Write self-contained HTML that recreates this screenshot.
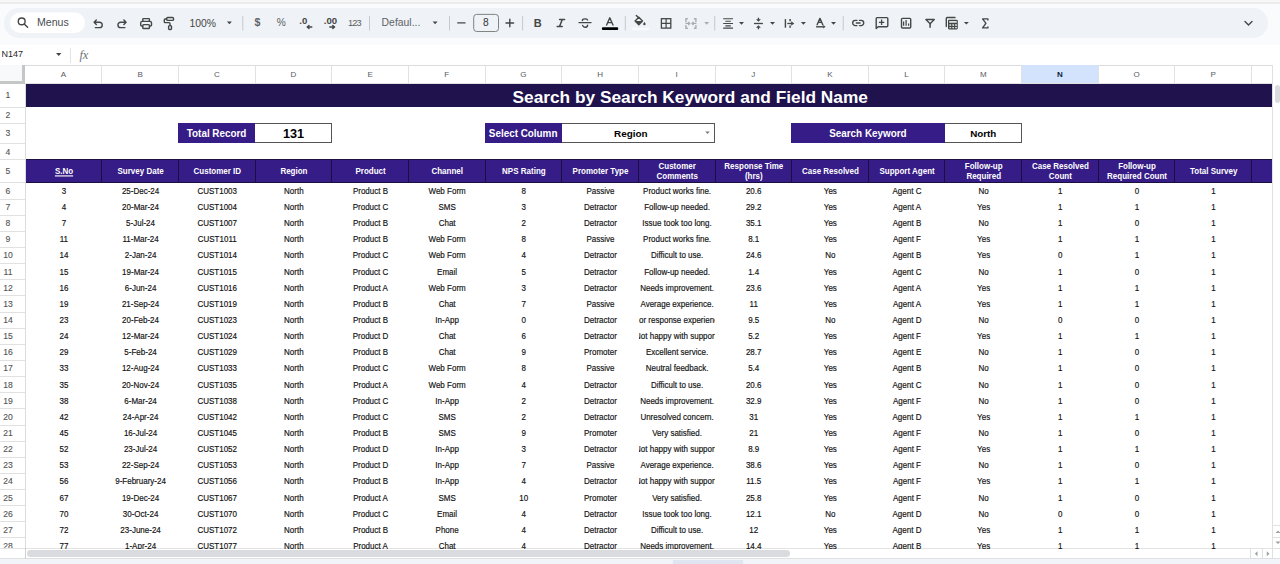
<!DOCTYPE html>
<html><head><meta charset="utf-8">
<style>
*{margin:0;padding:0;box-sizing:border-box}
html,body{width:1280px;height:564px;overflow:hidden;background:#f9fbfd;font-family:"Liberation Sans",sans-serif;position:relative}
.abs{position:absolute}
.t{position:absolute;white-space:nowrap;color:#444746}
.cell{position:absolute;display:flex;align-items:center;justify-content:center;white-space:nowrap;overflow:hidden;font-size:8px;color:#111;-webkit-text-stroke:0.15px #111}
.cell span,.hd span{display:inline-block;transform:scaleY(1.13)}
.hd{position:absolute;display:flex;align-items:center;justify-content:center;text-align:center;white-space:nowrap;overflow:hidden;font-size:8px;color:#fff;font-weight:bold;line-height:8.5px}
.colh{position:absolute;top:65.2px;height:18.4px;display:flex;align-items:center;justify-content:center;font-size:8px;color:#575b5f}
.rowh{position:absolute;left:0;width:16px;font-size:8.6px;color:#555;-webkit-text-stroke:0.12px #555;display:flex;align-items:center;justify-content:center}
svg{position:absolute;left:0;top:0;overflow:visible}
</style></head><body>

<div class="abs" style="left:0;top:0;width:1280px;height:1.8px;background:#f7f7f8"></div>
<div class="abs" style="left:0;top:1.8px;width:1280px;height:2px;background:#ececee"></div>
<svg width="1280" height="70" viewBox="0 0 1280 70"><rect x="4" y="8" width="1264" height="30" rx="15" fill="#eff2f6"/><rect x="10" y="12.5" width="75" height="20.5" rx="10.25" fill="#ffffff"/><circle cx="21.7" cy="21.4" r="3.4" fill="none" stroke="#444746" stroke-width="1.4" stroke-linecap="round" stroke-linejoin="round"/><line x1="24.2" y1="23.9" x2="27.6" y2="27.3" fill="none" stroke="#444746" stroke-width="1.4" stroke-linecap="round" stroke-linejoin="round" stroke-width="1.5"/><path d="M96.3 20.1 L94.1 22.3 L96.3 24.5 M94.1 22.3 H99.6 A2.65 2.65 0 0 1 99.6 27.6 H95.3" fill="none" stroke="#444746" stroke-width="1.4" stroke-linecap="round" stroke-linejoin="round" stroke-width="1.35"/><path d="M123.9 20.1 L126.1 22.3 L123.9 24.5 M126.1 22.3 H120.6 A2.65 2.65 0 0 0 120.6 27.6 H124.9" fill="none" stroke="#444746" stroke-width="1.4" stroke-linecap="round" stroke-linejoin="round" stroke-width="1.35"/><path d="M142.8 21.2 V19.2 Q142.8 18.6 143.4 18.6 H148.8 Q149.4 18.6 149.4 19.2 V21.2" fill="none" stroke="#444746" stroke-width="1.4" stroke-linecap="round" stroke-linejoin="round" stroke-width="1.3"/><path d="M142.6 26.0 H141.8 Q140.7 26.0 140.7 24.9 V22.9 Q140.7 21.4 142.2 21.4 H150.0 Q151.5 21.4 151.5 22.9 V24.9 Q151.5 26.0 150.4 26.0 H149.6" fill="none" stroke="#444746" stroke-width="1.4" stroke-linecap="round" stroke-linejoin="round" stroke-width="1.3"/><rect x="142.8" y="24.6" width="6.6" height="3.9" rx="0.8" fill="none" stroke="#444746" stroke-width="1.4" stroke-linecap="round" stroke-linejoin="round" stroke-width="1.3"/><rect x="166.6" y="17.5" width="7.0" height="2.9" rx="1.2" fill="none" stroke="#444746" stroke-width="1.4" stroke-linecap="round" stroke-linejoin="round" stroke-width="1.3"/><path d="M166.6 19.0 H165.2 Q164.3 19.0 164.3 19.9 V21.8 Q164.3 22.6 165.1 22.6 H169.2 Q170.0 22.6 170.0 23.4 V25.5" fill="none" stroke="#444746" stroke-width="1.4" stroke-linecap="round" stroke-linejoin="round" stroke-width="1.3"/><rect x="168.6" y="25.6" width="2.9" height="3.9" rx="0.9" fill="none" stroke="#444746" stroke-width="1.4" stroke-linecap="round" stroke-linejoin="round" stroke-width="1.3"/><path d="M226.90 21.60 h5 l-2.5 2.7 z" fill="#444746"/><path d="M432.60 21.60 h5 l-2.5 2.7 z" fill="#444746"/><rect x="242.30" y="16" width="1" height="14.5" fill="#c7c9cc"/><rect x="369.00" y="16" width="1" height="14.5" fill="#c7c9cc"/><rect x="449.00" y="16" width="1" height="14.5" fill="#c7c9cc"/><rect x="522.10" y="16" width="1" height="14.5" fill="#c7c9cc"/><rect x="624.80" y="16" width="1" height="14.5" fill="#c7c9cc"/><rect x="714.20" y="16" width="1" height="14.5" fill="#c7c9cc"/><rect x="842.70" y="16" width="1" height="14.5" fill="#c7c9cc"/><path d="M311.8 27.0 H307.4 M309.0 25.4 L307.2 27.0 L309.0 28.6" fill="none" stroke="#444746" stroke-width="1.4" stroke-linecap="round" stroke-linejoin="round" stroke-width="1.4"/><path d="M329.8 27.0 H334.4 M332.8 25.4 L334.6 27.0 L332.8 28.6" fill="none" stroke="#444746" stroke-width="1.4" stroke-linecap="round" stroke-linejoin="round" stroke-width="1.4"/><path d="M457.8 22.9 H465.0" fill="none" stroke="#444746" stroke-width="1.4" stroke-linecap="round" stroke-linejoin="round" stroke-width="1.4"/><path d="M506.0 23.0 H513.6 M509.8 19.2 V26.8" fill="none" stroke="#444746" stroke-width="1.4" stroke-linecap="round" stroke-linejoin="round" stroke-width="1.4"/><rect x="473.7" y="14.4" width="24.8" height="17.1" rx="3" fill="none" stroke="#747775" stroke-width="0.9"/><path d="M579.0 22.6 H591.0" fill="none" stroke="#444746" stroke-width="1.4" stroke-linecap="round" stroke-linejoin="round" stroke-width="1.2"/><path d="M587.6 20.0 Q587.0 18.9 585.0 18.9 Q582.4 18.9 582.4 20.6" fill="none" stroke="#444746" stroke-width="1.4" stroke-linecap="round" stroke-linejoin="round" stroke-width="1.3"/><path d="M582.6 25.4 Q583.2 27.3 585.0 27.3 Q587.6 27.3 587.6 25.2" fill="none" stroke="#444746" stroke-width="1.4" stroke-linecap="round" stroke-linejoin="round" stroke-width="1.3"/><rect x="601.9" y="27.3" width="16.3" height="2.7" rx="1" fill="#000"/><path d="M606.6 25.0 L609.8 17.8 L613.0 25.0 M607.7 22.6 H611.9" fill="none" stroke="#444746" stroke-width="1.4" stroke-linecap="round" stroke-linejoin="round" stroke-width="1.3" stroke-linecap="butt"/><path d="M636.3 15.4 L638.7 17.8" fill="none" stroke="#444746" stroke-width="1.4" stroke-linecap="round" stroke-linejoin="round" stroke-width="1.3"/><path d="M638.8 17.3 L642.5 21.0 L638.8 24.7 L635.1 21.0 Z" fill="none" stroke="#444746" stroke-width="1.4" stroke-linejoin="round"/><path d="M635.3 21.1 L642.3 21.1 L638.8 24.6 Z" fill="#444746"/><path d="M644.4 21.9 L645.5 23.6 A1.2 1.2 0 1 1 643.3 23.6 Z" fill="#444746"/><rect x="632" y="27.6" width="17" height="2.8" fill="#f8fafd"/><rect x="661.4" y="18.7" width="9.4" height="9.4" fill="none" stroke="#444746" stroke-width="1.3"/><path d="M666.1 18.7 V28.1 M661.4 23.4 H670.8" stroke="#444746" stroke-width="1.2"/><path d="M687.9 18.7 H685.9 V21.9 M685.9 24.9 V28.2 H687.9 M693.9 18.7 H695.9 V21.9 M695.9 24.9 V28.2 H693.9" fill="none" stroke="#a9acb0" stroke-width="1.35"/><path d="M685.4 23.4 H689.6 M688.2 21.9 L689.7 23.4 L688.2 24.9 M696.4 23.4 H692.2 M693.6 21.9 L692.1 23.4 L693.6 24.9" fill="none" stroke="#a9acb0" stroke-width="1.35" stroke-width="1.2"/><path d="M704.20 22.00 h5 l-2.5 2.7 z" fill="#a9acb0"/><path d="M723.2 18.8 H733.0 M725.4 21.3 H730.8 M723.2 23.5 H733.0 M725.4 25.9 H730.8 M723.2 28.1 H733.0" stroke="#444746" stroke-width="1.1"/><path d="M739.00 22.00 h5 l-2.5 2.7 z" fill="#444746"/><path d="M754.0 23.5 H762.9" stroke="#444746" stroke-width="1.3"/><path d="M758.45 17.7 V20.0" stroke="#444746" stroke-width="1.3"/><path d="M756.0 19.2 H760.9 L758.45 21.7 Z" fill="#444746"/><path d="M758.45 27.0 V29.3" stroke="#444746" stroke-width="1.3"/><path d="M756.0 27.8 H760.9 L758.45 25.2 Z" fill="#444746"/><path d="M770.00 22.00 h5 l-2.5 2.7 z" fill="#444746"/><path d="M785.4 19.1 V27.7" stroke="#444746" stroke-width="1.4"/><path d="M790.1 19.0 V21.2 M790.1 25.6 V27.8" stroke="#444746" stroke-width="1.5"/><path d="M787.3 23.5 H792.2" stroke="#444746" stroke-width="1.3"/><path d="M791.2 21.2 L794.2 23.5 L791.2 25.8 Z" fill="#444746"/><path d="M800.90 22.00 h5 l-2.5 2.7 z" fill="#444746"/><path d="M817.1 24.7 L819.95 18.4 L822.8 24.7 M818.1 22.4 H821.8" fill="none" stroke="#444746" stroke-width="1.4" stroke-linecap="round" stroke-linejoin="round" stroke-width="1.35" stroke-linecap="butt"/><path d="M816.1 26.8 H823.6" stroke="#444746" stroke-width="1.4"/><path d="M823.2 25.0 L825.6 26.8 L823.2 28.6 Z" fill="#444746"/><path d="M831.00 22.00 h5 l-2.5 2.7 z" fill="#444746"/><path d="M856.9 20.4 H855.3 A2.6 2.6 0 0 0 855.3 25.6 H856.9 M859.5 20.4 H861.1 A2.6 2.6 0 0 1 861.1 25.6 H859.5 M856.3 23.0 H860.1" fill="none" stroke="#444746" stroke-width="1.4" stroke-linecap="round" stroke-linejoin="round" stroke-width="1.4" stroke-linecap="butt"/><path d="M876.2 28.6 V18.6 Q876.2 17.6 877.2 17.6 H886.8 Q887.8 17.6 887.8 18.6 V25.8 Q887.8 26.8 886.8 26.8 H878.2 Z" fill="none" stroke="#444746" stroke-width="1.4" stroke-linecap="round" stroke-linejoin="round" stroke-width="1.25"/><path d="M881.6 19.6 V25.0 M878.9 22.3 H884.3" stroke="#444746" stroke-width="1.3"/><rect x="901.5" y="18.4" width="9.2" height="9.6" rx="0.9" fill="none" stroke="#444746" stroke-width="1.4" stroke-linecap="round" stroke-linejoin="round" stroke-width="1.25"/><path d="M903.6 21.6 V25.8 M906.1 20.0 V25.8 M908.6 23.6 V25.8" stroke="#444746" stroke-width="1.25"/><path d="M925.9 19.5 H934.3 L930.1 23.8 Z" fill="none" stroke="#444746" stroke-width="1.3" stroke-linejoin="round"/><path d="M930.1 23.2 V27.7" stroke="#444746" stroke-width="1.5"/><path d="M946.3 26.6 V18.4 Q946.3 17.5 947.2 17.5 H955.0" fill="none" stroke="#444746" stroke-width="1.4" stroke-linecap="round" stroke-linejoin="round" stroke-width="1.2" stroke-linecap="butt"/><rect x="948.0" y="19.7" width="9.8" height="9.7" rx="1.1" fill="#444746"/><rect x="949.2" y="21.1" width="7.5" height="1.6" fill="#eff2f6"/><rect x="949.4" y="24.2" width="1.8" height="1.7" fill="#eff2f6" opacity="0.85"/><rect x="952.3" y="24.2" width="1.8" height="1.7" fill="#eff2f6" opacity="0.85"/><rect x="955.1" y="24.2" width="1.8" height="1.7" fill="#eff2f6" opacity="0.85"/><rect x="949.4" y="27.0" width="1.8" height="1.3" fill="#eff2f6" opacity="0.85"/><rect x="952.3" y="27.0" width="1.8" height="1.3" fill="#eff2f6" opacity="0.85"/><rect x="955.1" y="27.0" width="1.8" height="1.3" fill="#eff2f6" opacity="0.85"/><path d="M963.90 21.90 h5 l-2.5 2.7 z" fill="#444746"/><path d="M987.9 19.9 V18.9 H982.6 L985.9 23.4 L982.6 27.9 H987.9 V26.9" fill="none" stroke="#444746" stroke-width="1.4" stroke-linecap="round" stroke-linejoin="round" stroke-width="1.5" stroke-linecap="butt" stroke-linejoin="miter"/><path d="M1245.0 21.5 L1248.5 25.0 L1252.0 21.5" fill="none" stroke="#444746" stroke-width="1.4" stroke-linecap="round" stroke-linejoin="round" stroke-width="1.5"/></svg>
<div class="t" style="left:37px;top:14.9px;font-size:10.6px;line-height:14px;color:#4a4d50">Menus</div>
<div class="t" style="left:189.4px;top:16.5px;font-size:10.4px;line-height:14px">100%</div>
<div class="t" style="left:254.5px;top:14.8px;font-size:10.6px;line-height:14px;font-weight:bold;color:#606366">$</div>
<div class="t" style="left:276.8px;top:16.3px;font-size:10.2px;line-height:14px;color:#5a5d60">%</div>
<div class="t" style="left:299.3px;top:14.0px;font-size:9.6px;line-height:14px;font-weight:bold">.0</div>
<div class="t" style="left:323.8px;top:14.0px;font-size:9.6px;line-height:14px;font-weight:bold">.00</div>
<div class="t" style="left:347.9px;top:16.4px;font-size:9.2px;line-height:14px;letter-spacing:-0.75px;color:#5a5d60">123</div>
<div class="t" style="left:381.6px;top:16.3px;font-size:10.4px;line-height:14px;color:#5f6368">Defaul...</div>
<div class="t" style="left:483.1px;top:15.9px;font-size:10.2px;line-height:14px;color:#333">8</div>
<div class="t" style="left:533.7px;top:16.4px;font-size:11px;line-height:14px;font-weight:bold">B</div>
<svg width="1280" height="70"><path d="M559.6 19.5 H564.6 M557.2 26.5 H562.2 M562.3 19.5 L559.5 26.5" fill="none" stroke="#444746" stroke-width="1.5" stroke-linecap="round"/></svg>
<div class="abs" style="left:0;top:44.8px;width:1280px;height:21.2px;background:#fff;border-bottom:1px solid #dadce0"></div>
<div class="t" style="left:1.6px;top:48.8px;font-size:9px;line-height:11px;color:#1f1f1f">N147</div>
<div class="abs" style="left:69.8px;top:48px;width:1px;height:15px;background:#e3e3e3"></div>
<svg width="1280" height="70"><path d="M56.0 52.9 h5.4 l-2.7 3.0 z" fill="#444746"/></svg>
<div class="t" style="left:79.6px;top:48.6px;font-size:12.5px;line-height:12px;color:#6f7377;letter-spacing:-0.3px;font-style:italic;font-family:'Liberation Serif',serif">fx</div>
<div class="abs" style="left:0;top:65.2px;width:1273px;height:483.5px;background:#fff"></div>
<div class="abs" style="left:0;top:64.8px;width:1280px;height:1px;background:#dadce0"></div>
<div class="abs" style="left:0;top:65.2px;width:22px;height:15.8px;background:#f8f9fa"></div>
<div class="colh" style="left:25.21px;width:76.64px;">A</div>
<div class="colh" style="left:101.85px;width:76.64px;">B</div>
<div class="abs" style="left:101.35px;top:65.2px;width:1px;height:18.4px;background:#e1e1e1"></div>
<div class="colh" style="left:178.50px;width:76.64px;">C</div>
<div class="abs" style="left:178.00px;top:65.2px;width:1px;height:18.4px;background:#e1e1e1"></div>
<div class="colh" style="left:255.14px;width:76.64px;">D</div>
<div class="abs" style="left:254.64px;top:65.2px;width:1px;height:18.4px;background:#e1e1e1"></div>
<div class="colh" style="left:331.78px;width:76.64px;">E</div>
<div class="abs" style="left:331.28px;top:65.2px;width:1px;height:18.4px;background:#e1e1e1"></div>
<div class="colh" style="left:408.43px;width:76.64px;">F</div>
<div class="abs" style="left:407.93px;top:65.2px;width:1px;height:18.4px;background:#e1e1e1"></div>
<div class="colh" style="left:485.07px;width:76.64px;">G</div>
<div class="abs" style="left:484.57px;top:65.2px;width:1px;height:18.4px;background:#e1e1e1"></div>
<div class="colh" style="left:561.71px;width:76.64px;">H</div>
<div class="abs" style="left:561.21px;top:65.2px;width:1px;height:18.4px;background:#e1e1e1"></div>
<div class="colh" style="left:638.35px;width:76.64px;">I</div>
<div class="abs" style="left:637.85px;top:65.2px;width:1px;height:18.4px;background:#e1e1e1"></div>
<div class="colh" style="left:715.00px;width:76.64px;">J</div>
<div class="abs" style="left:714.50px;top:65.2px;width:1px;height:18.4px;background:#e1e1e1"></div>
<div class="colh" style="left:791.64px;width:76.64px;">K</div>
<div class="abs" style="left:791.14px;top:65.2px;width:1px;height:18.4px;background:#e1e1e1"></div>
<div class="colh" style="left:868.28px;width:76.64px;">L</div>
<div class="abs" style="left:867.78px;top:65.2px;width:1px;height:18.4px;background:#e1e1e1"></div>
<div class="colh" style="left:944.93px;width:76.64px;">M</div>
<div class="abs" style="left:944.43px;top:65.2px;width:1px;height:18.4px;background:#e1e1e1"></div>
<div class="colh" style="left:1021.57px;width:76.64px;background:#d3e3fd;color:#0b1e3e;font-weight:bold;">N</div>
<div class="abs" style="left:1021.07px;top:65.2px;width:1px;height:18.4px;background:#e1e1e1"></div>
<div class="colh" style="left:1098.21px;width:76.64px;">O</div>
<div class="abs" style="left:1097.71px;top:65.2px;width:1px;height:18.4px;background:#e1e1e1"></div>
<div class="colh" style="left:1174.86px;width:76.64px;">P</div>
<div class="abs" style="left:1174.36px;top:65.2px;width:1px;height:18.4px;background:#e1e1e1"></div>
<div class="colh" style="left:1251.50px;width:21.50px;"></div>
<div class="abs" style="left:1251.00px;top:65.2px;width:1px;height:18.4px;background:#e1e1e1"></div>
<div class="abs" style="left:25px;top:83.1px;width:1248px;height:0.8px;background:#e1e1e1"></div>
<div class="abs" style="left:22px;top:65.2px;width:3px;height:18.4px;background:#c4c7c5"></div>
<div class="abs" style="left:0;top:81px;width:25px;height:2.6px;background:#c4c7c5"></div>
<div class="rowh" style="top:83.60px;height:23.40px;padding-top:0.4px">1</div>
<div class="abs" style="left:0;top:106.80px;width:25px;height:1px;background:#e1e1e1"></div>
<div class="rowh" style="top:107.00px;height:16.20px;padding-top:0.4px">2</div>
<div class="abs" style="left:0;top:123.00px;width:25px;height:1px;background:#e1e1e1"></div>
<div class="rowh" style="top:123.20px;height:20.20px;padding-top:0.4px">3</div>
<div class="abs" style="left:0;top:143.20px;width:25px;height:1px;background:#e1e1e1"></div>
<div class="rowh" style="top:143.40px;height:15.90px;padding-top:0.4px">4</div>
<div class="abs" style="left:0;top:159.10px;width:25px;height:1px;background:#e1e1e1"></div>
<div class="rowh" style="top:159.30px;height:23.30px;padding-top:0.4px">5</div>
<div class="abs" style="left:0;top:182.40px;width:25px;height:1px;background:#e1e1e1"></div>
<div class="rowh" style="top:182.60px;height:16.14px;padding-top:0.4px">6</div>
<div class="abs" style="left:0;top:198.54px;width:25px;height:1px;background:#e1e1e1"></div>
<div class="rowh" style="top:198.74px;height:16.14px;padding-top:0.4px">7</div>
<div class="abs" style="left:0;top:214.68px;width:25px;height:1px;background:#e1e1e1"></div>
<div class="rowh" style="top:214.88px;height:16.14px;padding-top:0.4px">8</div>
<div class="abs" style="left:0;top:230.82px;width:25px;height:1px;background:#e1e1e1"></div>
<div class="rowh" style="top:231.02px;height:16.14px;padding-top:0.4px">9</div>
<div class="abs" style="left:0;top:246.96px;width:25px;height:1px;background:#e1e1e1"></div>
<div class="rowh" style="top:247.16px;height:16.14px;padding-top:0.4px">10</div>
<div class="abs" style="left:0;top:263.10px;width:25px;height:1px;background:#e1e1e1"></div>
<div class="rowh" style="top:263.30px;height:16.14px;padding-top:0.4px">11</div>
<div class="abs" style="left:0;top:279.24px;width:25px;height:1px;background:#e1e1e1"></div>
<div class="rowh" style="top:279.44px;height:16.14px;padding-top:0.4px">12</div>
<div class="abs" style="left:0;top:295.38px;width:25px;height:1px;background:#e1e1e1"></div>
<div class="rowh" style="top:295.58px;height:16.14px;padding-top:0.4px">13</div>
<div class="abs" style="left:0;top:311.52px;width:25px;height:1px;background:#e1e1e1"></div>
<div class="rowh" style="top:311.72px;height:16.14px;padding-top:0.4px">14</div>
<div class="abs" style="left:0;top:327.66px;width:25px;height:1px;background:#e1e1e1"></div>
<div class="rowh" style="top:327.86px;height:16.14px;padding-top:0.4px">15</div>
<div class="abs" style="left:0;top:343.80px;width:25px;height:1px;background:#e1e1e1"></div>
<div class="rowh" style="top:344.00px;height:16.14px;padding-top:0.4px">16</div>
<div class="abs" style="left:0;top:359.94px;width:25px;height:1px;background:#e1e1e1"></div>
<div class="rowh" style="top:360.14px;height:16.14px;padding-top:0.4px">17</div>
<div class="abs" style="left:0;top:376.08px;width:25px;height:1px;background:#e1e1e1"></div>
<div class="rowh" style="top:376.28px;height:16.14px;padding-top:0.4px">18</div>
<div class="abs" style="left:0;top:392.22px;width:25px;height:1px;background:#e1e1e1"></div>
<div class="rowh" style="top:392.42px;height:16.14px;padding-top:0.4px">19</div>
<div class="abs" style="left:0;top:408.36px;width:25px;height:1px;background:#e1e1e1"></div>
<div class="rowh" style="top:408.56px;height:16.14px;padding-top:0.4px">20</div>
<div class="abs" style="left:0;top:424.50px;width:25px;height:1px;background:#e1e1e1"></div>
<div class="rowh" style="top:424.70px;height:16.14px;padding-top:0.4px">21</div>
<div class="abs" style="left:0;top:440.64px;width:25px;height:1px;background:#e1e1e1"></div>
<div class="rowh" style="top:440.84px;height:16.14px;padding-top:0.4px">22</div>
<div class="abs" style="left:0;top:456.78px;width:25px;height:1px;background:#e1e1e1"></div>
<div class="rowh" style="top:456.98px;height:16.14px;padding-top:0.4px">23</div>
<div class="abs" style="left:0;top:472.92px;width:25px;height:1px;background:#e1e1e1"></div>
<div class="rowh" style="top:473.12px;height:16.14px;padding-top:0.4px">24</div>
<div class="abs" style="left:0;top:489.06px;width:25px;height:1px;background:#e1e1e1"></div>
<div class="rowh" style="top:489.26px;height:16.14px;padding-top:0.4px">25</div>
<div class="abs" style="left:0;top:505.20px;width:25px;height:1px;background:#e1e1e1"></div>
<div class="rowh" style="top:505.40px;height:16.14px;padding-top:0.4px">26</div>
<div class="abs" style="left:0;top:521.34px;width:25px;height:1px;background:#e1e1e1"></div>
<div class="rowh" style="top:521.54px;height:16.14px;padding-top:0.4px">27</div>
<div class="abs" style="left:0;top:537.48px;width:25px;height:1px;background:#e1e1e1"></div>
<div class="rowh" style="top:537.68px;height:16.14px;padding-top:0.4px">28</div>
<div class="abs" style="left:24.6px;top:83.6px;width:1px;height:465px;background:#dcdcdc"></div>
<div class="abs" style="left:25.6px;top:84.00px;width:1247px;height:23.00px;background:#20124d"></div>
<div class="t" style="left:512.5px;top:86.60px;font-size:17.3px;line-height:20px;color:#fff;font-weight:bold">Search by Search Keyword and Field Name</div>
<div class="abs" style="left:178.20px;top:123.20px;width:76.80px;height:20.20px;background:#361c86;display:flex;align-items:center;justify-content:center;color:#fff;font-weight:bold;font-size:9.9px;padding-top:0.5px"><span style="display:inline-block;transform:scaleY(1.1)">Total Record</span></div>
<div class="abs" style="left:255.00px;top:123.20px;width:77.00px;height:20.20px;background:#fff;border:1px solid #555;border-left:none"></div>
<div class="abs" style="left:243.50px;top:123.20px;width:100px;height:20.20px;display:flex;align-items:center;justify-content:center;color:#000;font-weight:bold;font-size:12.7px;padding-top:0.5px">131</div>
<div class="abs" style="left:484.70px;top:123.20px;width:76.90px;height:20.20px;background:#361c86;display:flex;align-items:center;justify-content:center;color:#fff;font-weight:bold;font-size:9.9px;padding-top:0.5px"><span style="display:inline-block;transform:scaleY(1.1)">Select Column</span></div>
<div class="abs" style="left:561.60px;top:123.20px;width:153.90px;height:20.20px;background:#fff;border:1px solid #555;border-left:none"></div>
<div class="abs" style="left:580.80px;top:123.20px;width:100px;height:20.20px;display:flex;align-items:center;justify-content:center;color:#000;font-weight:bold;font-size:9.9px;padding-top:0.5px">Region</div>
<div class="abs" style="left:791.00px;top:123.20px;width:153.80px;height:20.20px;background:#361c86;display:flex;align-items:center;justify-content:center;color:#fff;font-weight:bold;font-size:9.9px;padding-top:0.5px"><span style="display:inline-block;transform:scaleY(1.1)">Search Keyword</span></div>
<div class="abs" style="left:944.80px;top:123.20px;width:77.00px;height:20.20px;background:#fff;border:1px solid #555;border-left:none"></div>
<div class="abs" style="left:933.30px;top:123.20px;width:100px;height:20.20px;display:flex;align-items:center;justify-content:center;color:#000;font-weight:bold;font-size:9.8px;padding-top:0.5px">North</div>
<svg width="1280" height="564"><path d="M705.2 131.4 h4.6 l-2.3 2.6 z" fill="#7d7d7d"/></svg>
<div class="abs" style="left:25.6px;top:159.00px;width:1247px;height:23.60px;background:#361c86;border-bottom:1px solid #1c0f40;border-top:0.8px solid #1c0f40;border-right:1px solid #1c0f40"></div>
<div class="hd" style="left:25.71px;top:159.30px;width:76.64px;height:23.30px;padding-top:2.9px;text-decoration:underline;"><span>S.No</span></div>
<div class="abs" style="left:101.35px;top:159.30px;width:1px;height:23.30px;background:#1c0f40"></div>
<div class="hd" style="left:102.35px;top:159.30px;width:76.64px;height:23.30px;padding-top:2.9px;"><span>Survey Date</span></div>
<div class="abs" style="left:178.00px;top:159.30px;width:1px;height:23.30px;background:#1c0f40"></div>
<div class="hd" style="left:179.00px;top:159.30px;width:76.64px;height:23.30px;padding-top:2.9px;"><span>Customer ID</span></div>
<div class="abs" style="left:254.64px;top:159.30px;width:1px;height:23.30px;background:#1c0f40"></div>
<div class="hd" style="left:255.64px;top:159.30px;width:76.64px;height:23.30px;padding-top:2.9px;"><span>Region</span></div>
<div class="abs" style="left:331.28px;top:159.30px;width:1px;height:23.30px;background:#1c0f40"></div>
<div class="hd" style="left:332.28px;top:159.30px;width:76.64px;height:23.30px;padding-top:2.9px;"><span>Product</span></div>
<div class="abs" style="left:407.93px;top:159.30px;width:1px;height:23.30px;background:#1c0f40"></div>
<div class="hd" style="left:408.93px;top:159.30px;width:76.64px;height:23.30px;padding-top:2.9px;"><span>Channel</span></div>
<div class="abs" style="left:484.57px;top:159.30px;width:1px;height:23.30px;background:#1c0f40"></div>
<div class="hd" style="left:485.57px;top:159.30px;width:76.64px;height:23.30px;padding-top:2.9px;"><span>NPS Rating</span></div>
<div class="abs" style="left:561.21px;top:159.30px;width:1px;height:23.30px;background:#1c0f40"></div>
<div class="hd" style="left:562.21px;top:159.30px;width:76.64px;height:23.30px;padding-top:2.9px;"><span>Promoter Type</span></div>
<div class="abs" style="left:637.85px;top:159.30px;width:1px;height:23.30px;background:#1c0f40"></div>
<div class="hd" style="left:638.85px;top:159.30px;width:76.64px;height:23.30px;padding-top:1.3px;"><span>Customer<br>Comments</span></div>
<div class="abs" style="left:714.50px;top:159.30px;width:1px;height:23.30px;background:#1c0f40"></div>
<div class="hd" style="left:715.50px;top:159.30px;width:76.64px;height:23.30px;padding-top:1.3px;"><span>Response Time<br>(hrs)</span></div>
<div class="abs" style="left:791.14px;top:159.30px;width:1px;height:23.30px;background:#1c0f40"></div>
<div class="hd" style="left:792.14px;top:159.30px;width:76.64px;height:23.30px;padding-top:2.9px;"><span>Case Resolved</span></div>
<div class="abs" style="left:867.78px;top:159.30px;width:1px;height:23.30px;background:#1c0f40"></div>
<div class="hd" style="left:868.78px;top:159.30px;width:76.64px;height:23.30px;padding-top:2.9px;"><span>Support Agent</span></div>
<div class="abs" style="left:944.43px;top:159.30px;width:1px;height:23.30px;background:#1c0f40"></div>
<div class="hd" style="left:945.43px;top:159.30px;width:76.64px;height:23.30px;padding-top:1.3px;"><span>Follow-up<br>Required</span></div>
<div class="abs" style="left:1021.07px;top:159.30px;width:1px;height:23.30px;background:#1c0f40"></div>
<div class="hd" style="left:1022.07px;top:159.30px;width:76.64px;height:23.30px;padding-top:1.3px;"><span>Case Resolved<br>Count</span></div>
<div class="abs" style="left:1097.71px;top:159.30px;width:1px;height:23.30px;background:#1c0f40"></div>
<div class="hd" style="left:1098.71px;top:159.30px;width:76.64px;height:23.30px;padding-top:1.3px;"><span>Follow-up<br>Required Count</span></div>
<div class="abs" style="left:1174.36px;top:159.30px;width:1px;height:23.30px;background:#1c0f40"></div>
<div class="hd" style="left:1175.36px;top:159.30px;width:76.64px;height:23.30px;padding-top:2.9px;"><span>Total Survey</span></div>
<div class="abs" style="left:1251.00px;top:159.30px;width:1px;height:23.30px;background:#1c0f40"></div>
<div class="abs" style="left:0;top:548.3px;width:1273px;height:1px;background:#e3e3e3"></div>
<div class="cell" style="left:25.61px;top:183.30px;width:76.64px;height:16.14px"><span>3</span></div>
<div class="cell" style="left:102.25px;top:183.30px;width:76.64px;height:16.14px"><span>25-Dec-24</span></div>
<div class="cell" style="left:178.90px;top:183.30px;width:76.64px;height:16.14px"><span>CUST1003</span></div>
<div class="cell" style="left:255.54px;top:183.30px;width:76.64px;height:16.14px"><span>North</span></div>
<div class="cell" style="left:332.18px;top:183.30px;width:76.64px;height:16.14px"><span>Product B</span></div>
<div class="cell" style="left:408.82px;top:183.30px;width:76.64px;height:16.14px"><span>Web Form</span></div>
<div class="cell" style="left:485.47px;top:183.30px;width:76.64px;height:16.14px"><span>8</span></div>
<div class="cell" style="left:562.11px;top:183.30px;width:76.64px;height:16.14px"><span>Passive</span></div>
<div class="cell" style="left:638.75px;top:183.30px;width:76.64px;height:16.14px"><span>Product works fine.</span></div>
<div class="cell" style="left:715.40px;top:183.30px;width:76.64px;height:16.14px"><span>20.6</span></div>
<div class="cell" style="left:792.04px;top:183.30px;width:76.64px;height:16.14px"><span>Yes</span></div>
<div class="cell" style="left:868.68px;top:183.30px;width:76.64px;height:16.14px"><span>Agent C</span></div>
<div class="cell" style="left:945.33px;top:183.30px;width:76.64px;height:16.14px"><span>No</span></div>
<div class="cell" style="left:1021.97px;top:183.30px;width:76.64px;height:16.14px"><span>1</span></div>
<div class="cell" style="left:1098.61px;top:183.30px;width:76.64px;height:16.14px"><span>0</span></div>
<div class="cell" style="left:1175.26px;top:183.30px;width:76.64px;height:16.14px"><span>1</span></div>
<div class="cell" style="left:25.61px;top:199.44px;width:76.64px;height:16.14px"><span>4</span></div>
<div class="cell" style="left:102.25px;top:199.44px;width:76.64px;height:16.14px"><span>20-Mar-24</span></div>
<div class="cell" style="left:178.90px;top:199.44px;width:76.64px;height:16.14px"><span>CUST1004</span></div>
<div class="cell" style="left:255.54px;top:199.44px;width:76.64px;height:16.14px"><span>North</span></div>
<div class="cell" style="left:332.18px;top:199.44px;width:76.64px;height:16.14px"><span>Product C</span></div>
<div class="cell" style="left:408.82px;top:199.44px;width:76.64px;height:16.14px"><span>SMS</span></div>
<div class="cell" style="left:485.47px;top:199.44px;width:76.64px;height:16.14px"><span>3</span></div>
<div class="cell" style="left:562.11px;top:199.44px;width:76.64px;height:16.14px"><span>Detractor</span></div>
<div class="cell" style="left:638.75px;top:199.44px;width:76.64px;height:16.14px"><span>Follow-up needed.</span></div>
<div class="cell" style="left:715.40px;top:199.44px;width:76.64px;height:16.14px"><span>29.2</span></div>
<div class="cell" style="left:792.04px;top:199.44px;width:76.64px;height:16.14px"><span>Yes</span></div>
<div class="cell" style="left:868.68px;top:199.44px;width:76.64px;height:16.14px"><span>Agent A</span></div>
<div class="cell" style="left:945.33px;top:199.44px;width:76.64px;height:16.14px"><span>Yes</span></div>
<div class="cell" style="left:1021.97px;top:199.44px;width:76.64px;height:16.14px"><span>1</span></div>
<div class="cell" style="left:1098.61px;top:199.44px;width:76.64px;height:16.14px"><span>1</span></div>
<div class="cell" style="left:1175.26px;top:199.44px;width:76.64px;height:16.14px"><span>1</span></div>
<div class="cell" style="left:25.61px;top:215.58px;width:76.64px;height:16.14px"><span>7</span></div>
<div class="cell" style="left:102.25px;top:215.58px;width:76.64px;height:16.14px"><span>5-Jul-24</span></div>
<div class="cell" style="left:178.90px;top:215.58px;width:76.64px;height:16.14px"><span>CUST1007</span></div>
<div class="cell" style="left:255.54px;top:215.58px;width:76.64px;height:16.14px"><span>North</span></div>
<div class="cell" style="left:332.18px;top:215.58px;width:76.64px;height:16.14px"><span>Product B</span></div>
<div class="cell" style="left:408.82px;top:215.58px;width:76.64px;height:16.14px"><span>Chat</span></div>
<div class="cell" style="left:485.47px;top:215.58px;width:76.64px;height:16.14px"><span>2</span></div>
<div class="cell" style="left:562.11px;top:215.58px;width:76.64px;height:16.14px"><span>Detractor</span></div>
<div class="cell" style="left:638.75px;top:215.58px;width:76.64px;height:16.14px"><span>Issue took too long.</span></div>
<div class="cell" style="left:715.40px;top:215.58px;width:76.64px;height:16.14px"><span>35.1</span></div>
<div class="cell" style="left:792.04px;top:215.58px;width:76.64px;height:16.14px"><span>Yes</span></div>
<div class="cell" style="left:868.68px;top:215.58px;width:76.64px;height:16.14px"><span>Agent B</span></div>
<div class="cell" style="left:945.33px;top:215.58px;width:76.64px;height:16.14px"><span>No</span></div>
<div class="cell" style="left:1021.97px;top:215.58px;width:76.64px;height:16.14px"><span>1</span></div>
<div class="cell" style="left:1098.61px;top:215.58px;width:76.64px;height:16.14px"><span>0</span></div>
<div class="cell" style="left:1175.26px;top:215.58px;width:76.64px;height:16.14px"><span>1</span></div>
<div class="cell" style="left:25.61px;top:231.72px;width:76.64px;height:16.14px"><span>11</span></div>
<div class="cell" style="left:102.25px;top:231.72px;width:76.64px;height:16.14px"><span>11-Mar-24</span></div>
<div class="cell" style="left:178.90px;top:231.72px;width:76.64px;height:16.14px"><span>CUST1011</span></div>
<div class="cell" style="left:255.54px;top:231.72px;width:76.64px;height:16.14px"><span>North</span></div>
<div class="cell" style="left:332.18px;top:231.72px;width:76.64px;height:16.14px"><span>Product B</span></div>
<div class="cell" style="left:408.82px;top:231.72px;width:76.64px;height:16.14px"><span>Web Form</span></div>
<div class="cell" style="left:485.47px;top:231.72px;width:76.64px;height:16.14px"><span>8</span></div>
<div class="cell" style="left:562.11px;top:231.72px;width:76.64px;height:16.14px"><span>Passive</span></div>
<div class="cell" style="left:638.75px;top:231.72px;width:76.64px;height:16.14px"><span>Product works fine.</span></div>
<div class="cell" style="left:715.40px;top:231.72px;width:76.64px;height:16.14px"><span>8.1</span></div>
<div class="cell" style="left:792.04px;top:231.72px;width:76.64px;height:16.14px"><span>Yes</span></div>
<div class="cell" style="left:868.68px;top:231.72px;width:76.64px;height:16.14px"><span>Agent F</span></div>
<div class="cell" style="left:945.33px;top:231.72px;width:76.64px;height:16.14px"><span>Yes</span></div>
<div class="cell" style="left:1021.97px;top:231.72px;width:76.64px;height:16.14px"><span>1</span></div>
<div class="cell" style="left:1098.61px;top:231.72px;width:76.64px;height:16.14px"><span>1</span></div>
<div class="cell" style="left:1175.26px;top:231.72px;width:76.64px;height:16.14px"><span>1</span></div>
<div class="cell" style="left:25.61px;top:247.86px;width:76.64px;height:16.14px"><span>14</span></div>
<div class="cell" style="left:102.25px;top:247.86px;width:76.64px;height:16.14px"><span>2-Jan-24</span></div>
<div class="cell" style="left:178.90px;top:247.86px;width:76.64px;height:16.14px"><span>CUST1014</span></div>
<div class="cell" style="left:255.54px;top:247.86px;width:76.64px;height:16.14px"><span>North</span></div>
<div class="cell" style="left:332.18px;top:247.86px;width:76.64px;height:16.14px"><span>Product C</span></div>
<div class="cell" style="left:408.82px;top:247.86px;width:76.64px;height:16.14px"><span>Web Form</span></div>
<div class="cell" style="left:485.47px;top:247.86px;width:76.64px;height:16.14px"><span>4</span></div>
<div class="cell" style="left:562.11px;top:247.86px;width:76.64px;height:16.14px"><span>Detractor</span></div>
<div class="cell" style="left:638.75px;top:247.86px;width:76.64px;height:16.14px"><span>Difficult to use.</span></div>
<div class="cell" style="left:715.40px;top:247.86px;width:76.64px;height:16.14px"><span>24.6</span></div>
<div class="cell" style="left:792.04px;top:247.86px;width:76.64px;height:16.14px"><span>No</span></div>
<div class="cell" style="left:868.68px;top:247.86px;width:76.64px;height:16.14px"><span>Agent B</span></div>
<div class="cell" style="left:945.33px;top:247.86px;width:76.64px;height:16.14px"><span>Yes</span></div>
<div class="cell" style="left:1021.97px;top:247.86px;width:76.64px;height:16.14px"><span>0</span></div>
<div class="cell" style="left:1098.61px;top:247.86px;width:76.64px;height:16.14px"><span>1</span></div>
<div class="cell" style="left:1175.26px;top:247.86px;width:76.64px;height:16.14px"><span>1</span></div>
<div class="cell" style="left:25.61px;top:264.00px;width:76.64px;height:16.14px"><span>15</span></div>
<div class="cell" style="left:102.25px;top:264.00px;width:76.64px;height:16.14px"><span>19-Mar-24</span></div>
<div class="cell" style="left:178.90px;top:264.00px;width:76.64px;height:16.14px"><span>CUST1015</span></div>
<div class="cell" style="left:255.54px;top:264.00px;width:76.64px;height:16.14px"><span>North</span></div>
<div class="cell" style="left:332.18px;top:264.00px;width:76.64px;height:16.14px"><span>Product C</span></div>
<div class="cell" style="left:408.82px;top:264.00px;width:76.64px;height:16.14px"><span>Email</span></div>
<div class="cell" style="left:485.47px;top:264.00px;width:76.64px;height:16.14px"><span>5</span></div>
<div class="cell" style="left:562.11px;top:264.00px;width:76.64px;height:16.14px"><span>Detractor</span></div>
<div class="cell" style="left:638.75px;top:264.00px;width:76.64px;height:16.14px"><span>Follow-up needed.</span></div>
<div class="cell" style="left:715.40px;top:264.00px;width:76.64px;height:16.14px"><span>1.4</span></div>
<div class="cell" style="left:792.04px;top:264.00px;width:76.64px;height:16.14px"><span>Yes</span></div>
<div class="cell" style="left:868.68px;top:264.00px;width:76.64px;height:16.14px"><span>Agent C</span></div>
<div class="cell" style="left:945.33px;top:264.00px;width:76.64px;height:16.14px"><span>No</span></div>
<div class="cell" style="left:1021.97px;top:264.00px;width:76.64px;height:16.14px"><span>1</span></div>
<div class="cell" style="left:1098.61px;top:264.00px;width:76.64px;height:16.14px"><span>0</span></div>
<div class="cell" style="left:1175.26px;top:264.00px;width:76.64px;height:16.14px"><span>1</span></div>
<div class="cell" style="left:25.61px;top:280.14px;width:76.64px;height:16.14px"><span>16</span></div>
<div class="cell" style="left:102.25px;top:280.14px;width:76.64px;height:16.14px"><span>6-Jun-24</span></div>
<div class="cell" style="left:178.90px;top:280.14px;width:76.64px;height:16.14px"><span>CUST1016</span></div>
<div class="cell" style="left:255.54px;top:280.14px;width:76.64px;height:16.14px"><span>North</span></div>
<div class="cell" style="left:332.18px;top:280.14px;width:76.64px;height:16.14px"><span>Product A</span></div>
<div class="cell" style="left:408.82px;top:280.14px;width:76.64px;height:16.14px"><span>Web Form</span></div>
<div class="cell" style="left:485.47px;top:280.14px;width:76.64px;height:16.14px"><span>3</span></div>
<div class="cell" style="left:562.11px;top:280.14px;width:76.64px;height:16.14px"><span>Detractor</span></div>
<div class="cell" style="left:638.75px;top:280.14px;width:76.64px;height:16.14px"><span>Needs improvement.</span></div>
<div class="cell" style="left:715.40px;top:280.14px;width:76.64px;height:16.14px"><span>23.6</span></div>
<div class="cell" style="left:792.04px;top:280.14px;width:76.64px;height:16.14px"><span>Yes</span></div>
<div class="cell" style="left:868.68px;top:280.14px;width:76.64px;height:16.14px"><span>Agent A</span></div>
<div class="cell" style="left:945.33px;top:280.14px;width:76.64px;height:16.14px"><span>Yes</span></div>
<div class="cell" style="left:1021.97px;top:280.14px;width:76.64px;height:16.14px"><span>1</span></div>
<div class="cell" style="left:1098.61px;top:280.14px;width:76.64px;height:16.14px"><span>1</span></div>
<div class="cell" style="left:1175.26px;top:280.14px;width:76.64px;height:16.14px"><span>1</span></div>
<div class="cell" style="left:25.61px;top:296.28px;width:76.64px;height:16.14px"><span>19</span></div>
<div class="cell" style="left:102.25px;top:296.28px;width:76.64px;height:16.14px"><span>21-Sep-24</span></div>
<div class="cell" style="left:178.90px;top:296.28px;width:76.64px;height:16.14px"><span>CUST1019</span></div>
<div class="cell" style="left:255.54px;top:296.28px;width:76.64px;height:16.14px"><span>North</span></div>
<div class="cell" style="left:332.18px;top:296.28px;width:76.64px;height:16.14px"><span>Product B</span></div>
<div class="cell" style="left:408.82px;top:296.28px;width:76.64px;height:16.14px"><span>Chat</span></div>
<div class="cell" style="left:485.47px;top:296.28px;width:76.64px;height:16.14px"><span>7</span></div>
<div class="cell" style="left:562.11px;top:296.28px;width:76.64px;height:16.14px"><span>Passive</span></div>
<div class="cell" style="left:638.75px;top:296.28px;width:76.64px;height:16.14px"><span>Average experience.</span></div>
<div class="cell" style="left:715.40px;top:296.28px;width:76.64px;height:16.14px"><span>11</span></div>
<div class="cell" style="left:792.04px;top:296.28px;width:76.64px;height:16.14px"><span>Yes</span></div>
<div class="cell" style="left:868.68px;top:296.28px;width:76.64px;height:16.14px"><span>Agent A</span></div>
<div class="cell" style="left:945.33px;top:296.28px;width:76.64px;height:16.14px"><span>Yes</span></div>
<div class="cell" style="left:1021.97px;top:296.28px;width:76.64px;height:16.14px"><span>1</span></div>
<div class="cell" style="left:1098.61px;top:296.28px;width:76.64px;height:16.14px"><span>1</span></div>
<div class="cell" style="left:1175.26px;top:296.28px;width:76.64px;height:16.14px"><span>1</span></div>
<div class="cell" style="left:25.61px;top:312.42px;width:76.64px;height:16.14px"><span>23</span></div>
<div class="cell" style="left:102.25px;top:312.42px;width:76.64px;height:16.14px"><span>20-Feb-24</span></div>
<div class="cell" style="left:178.90px;top:312.42px;width:76.64px;height:16.14px"><span>CUST1023</span></div>
<div class="cell" style="left:255.54px;top:312.42px;width:76.64px;height:16.14px"><span>North</span></div>
<div class="cell" style="left:332.18px;top:312.42px;width:76.64px;height:16.14px"><span>Product B</span></div>
<div class="cell" style="left:408.82px;top:312.42px;width:76.64px;height:16.14px"><span>In-App</span></div>
<div class="cell" style="left:485.47px;top:312.42px;width:76.64px;height:16.14px"><span>0</span></div>
<div class="cell" style="left:562.11px;top:312.42px;width:76.64px;height:16.14px"><span>Detractor</span></div>
<div class="cell" style="left:638.75px;top:312.42px;width:76.64px;height:16.14px"><span>Poor response experience.</span></div>
<div class="cell" style="left:715.40px;top:312.42px;width:76.64px;height:16.14px"><span>9.5</span></div>
<div class="cell" style="left:792.04px;top:312.42px;width:76.64px;height:16.14px"><span>No</span></div>
<div class="cell" style="left:868.68px;top:312.42px;width:76.64px;height:16.14px"><span>Agent D</span></div>
<div class="cell" style="left:945.33px;top:312.42px;width:76.64px;height:16.14px"><span>No</span></div>
<div class="cell" style="left:1021.97px;top:312.42px;width:76.64px;height:16.14px"><span>0</span></div>
<div class="cell" style="left:1098.61px;top:312.42px;width:76.64px;height:16.14px"><span>0</span></div>
<div class="cell" style="left:1175.26px;top:312.42px;width:76.64px;height:16.14px"><span>1</span></div>
<div class="cell" style="left:25.61px;top:328.56px;width:76.64px;height:16.14px"><span>24</span></div>
<div class="cell" style="left:102.25px;top:328.56px;width:76.64px;height:16.14px"><span>12-Mar-24</span></div>
<div class="cell" style="left:178.90px;top:328.56px;width:76.64px;height:16.14px"><span>CUST1024</span></div>
<div class="cell" style="left:255.54px;top:328.56px;width:76.64px;height:16.14px"><span>North</span></div>
<div class="cell" style="left:332.18px;top:328.56px;width:76.64px;height:16.14px"><span>Product D</span></div>
<div class="cell" style="left:408.82px;top:328.56px;width:76.64px;height:16.14px"><span>Chat</span></div>
<div class="cell" style="left:485.47px;top:328.56px;width:76.64px;height:16.14px"><span>6</span></div>
<div class="cell" style="left:562.11px;top:328.56px;width:76.64px;height:16.14px"><span>Detractor</span></div>
<div class="cell" style="left:638.75px;top:328.56px;width:76.64px;height:16.14px"><span>Not happy with support.</span></div>
<div class="cell" style="left:715.40px;top:328.56px;width:76.64px;height:16.14px"><span>5.2</span></div>
<div class="cell" style="left:792.04px;top:328.56px;width:76.64px;height:16.14px"><span>Yes</span></div>
<div class="cell" style="left:868.68px;top:328.56px;width:76.64px;height:16.14px"><span>Agent F</span></div>
<div class="cell" style="left:945.33px;top:328.56px;width:76.64px;height:16.14px"><span>Yes</span></div>
<div class="cell" style="left:1021.97px;top:328.56px;width:76.64px;height:16.14px"><span>1</span></div>
<div class="cell" style="left:1098.61px;top:328.56px;width:76.64px;height:16.14px"><span>1</span></div>
<div class="cell" style="left:1175.26px;top:328.56px;width:76.64px;height:16.14px"><span>1</span></div>
<div class="cell" style="left:25.61px;top:344.70px;width:76.64px;height:16.14px"><span>29</span></div>
<div class="cell" style="left:102.25px;top:344.70px;width:76.64px;height:16.14px"><span>5-Feb-24</span></div>
<div class="cell" style="left:178.90px;top:344.70px;width:76.64px;height:16.14px"><span>CUST1029</span></div>
<div class="cell" style="left:255.54px;top:344.70px;width:76.64px;height:16.14px"><span>North</span></div>
<div class="cell" style="left:332.18px;top:344.70px;width:76.64px;height:16.14px"><span>Product B</span></div>
<div class="cell" style="left:408.82px;top:344.70px;width:76.64px;height:16.14px"><span>Chat</span></div>
<div class="cell" style="left:485.47px;top:344.70px;width:76.64px;height:16.14px"><span>9</span></div>
<div class="cell" style="left:562.11px;top:344.70px;width:76.64px;height:16.14px"><span>Promoter</span></div>
<div class="cell" style="left:638.75px;top:344.70px;width:76.64px;height:16.14px"><span>Excellent service.</span></div>
<div class="cell" style="left:715.40px;top:344.70px;width:76.64px;height:16.14px"><span>28.7</span></div>
<div class="cell" style="left:792.04px;top:344.70px;width:76.64px;height:16.14px"><span>Yes</span></div>
<div class="cell" style="left:868.68px;top:344.70px;width:76.64px;height:16.14px"><span>Agent E</span></div>
<div class="cell" style="left:945.33px;top:344.70px;width:76.64px;height:16.14px"><span>No</span></div>
<div class="cell" style="left:1021.97px;top:344.70px;width:76.64px;height:16.14px"><span>1</span></div>
<div class="cell" style="left:1098.61px;top:344.70px;width:76.64px;height:16.14px"><span>0</span></div>
<div class="cell" style="left:1175.26px;top:344.70px;width:76.64px;height:16.14px"><span>1</span></div>
<div class="cell" style="left:25.61px;top:360.84px;width:76.64px;height:16.14px"><span>33</span></div>
<div class="cell" style="left:102.25px;top:360.84px;width:76.64px;height:16.14px"><span>12-Aug-24</span></div>
<div class="cell" style="left:178.90px;top:360.84px;width:76.64px;height:16.14px"><span>CUST1033</span></div>
<div class="cell" style="left:255.54px;top:360.84px;width:76.64px;height:16.14px"><span>North</span></div>
<div class="cell" style="left:332.18px;top:360.84px;width:76.64px;height:16.14px"><span>Product C</span></div>
<div class="cell" style="left:408.82px;top:360.84px;width:76.64px;height:16.14px"><span>Web Form</span></div>
<div class="cell" style="left:485.47px;top:360.84px;width:76.64px;height:16.14px"><span>8</span></div>
<div class="cell" style="left:562.11px;top:360.84px;width:76.64px;height:16.14px"><span>Passive</span></div>
<div class="cell" style="left:638.75px;top:360.84px;width:76.64px;height:16.14px"><span>Neutral feedback.</span></div>
<div class="cell" style="left:715.40px;top:360.84px;width:76.64px;height:16.14px"><span>5.4</span></div>
<div class="cell" style="left:792.04px;top:360.84px;width:76.64px;height:16.14px"><span>Yes</span></div>
<div class="cell" style="left:868.68px;top:360.84px;width:76.64px;height:16.14px"><span>Agent B</span></div>
<div class="cell" style="left:945.33px;top:360.84px;width:76.64px;height:16.14px"><span>No</span></div>
<div class="cell" style="left:1021.97px;top:360.84px;width:76.64px;height:16.14px"><span>1</span></div>
<div class="cell" style="left:1098.61px;top:360.84px;width:76.64px;height:16.14px"><span>0</span></div>
<div class="cell" style="left:1175.26px;top:360.84px;width:76.64px;height:16.14px"><span>1</span></div>
<div class="cell" style="left:25.61px;top:376.98px;width:76.64px;height:16.14px"><span>35</span></div>
<div class="cell" style="left:102.25px;top:376.98px;width:76.64px;height:16.14px"><span>20-Nov-24</span></div>
<div class="cell" style="left:178.90px;top:376.98px;width:76.64px;height:16.14px"><span>CUST1035</span></div>
<div class="cell" style="left:255.54px;top:376.98px;width:76.64px;height:16.14px"><span>North</span></div>
<div class="cell" style="left:332.18px;top:376.98px;width:76.64px;height:16.14px"><span>Product A</span></div>
<div class="cell" style="left:408.82px;top:376.98px;width:76.64px;height:16.14px"><span>Web Form</span></div>
<div class="cell" style="left:485.47px;top:376.98px;width:76.64px;height:16.14px"><span>4</span></div>
<div class="cell" style="left:562.11px;top:376.98px;width:76.64px;height:16.14px"><span>Detractor</span></div>
<div class="cell" style="left:638.75px;top:376.98px;width:76.64px;height:16.14px"><span>Difficult to use.</span></div>
<div class="cell" style="left:715.40px;top:376.98px;width:76.64px;height:16.14px"><span>20.6</span></div>
<div class="cell" style="left:792.04px;top:376.98px;width:76.64px;height:16.14px"><span>Yes</span></div>
<div class="cell" style="left:868.68px;top:376.98px;width:76.64px;height:16.14px"><span>Agent C</span></div>
<div class="cell" style="left:945.33px;top:376.98px;width:76.64px;height:16.14px"><span>No</span></div>
<div class="cell" style="left:1021.97px;top:376.98px;width:76.64px;height:16.14px"><span>1</span></div>
<div class="cell" style="left:1098.61px;top:376.98px;width:76.64px;height:16.14px"><span>0</span></div>
<div class="cell" style="left:1175.26px;top:376.98px;width:76.64px;height:16.14px"><span>1</span></div>
<div class="cell" style="left:25.61px;top:393.12px;width:76.64px;height:16.14px"><span>38</span></div>
<div class="cell" style="left:102.25px;top:393.12px;width:76.64px;height:16.14px"><span>6-Mar-24</span></div>
<div class="cell" style="left:178.90px;top:393.12px;width:76.64px;height:16.14px"><span>CUST1038</span></div>
<div class="cell" style="left:255.54px;top:393.12px;width:76.64px;height:16.14px"><span>North</span></div>
<div class="cell" style="left:332.18px;top:393.12px;width:76.64px;height:16.14px"><span>Product C</span></div>
<div class="cell" style="left:408.82px;top:393.12px;width:76.64px;height:16.14px"><span>In-App</span></div>
<div class="cell" style="left:485.47px;top:393.12px;width:76.64px;height:16.14px"><span>2</span></div>
<div class="cell" style="left:562.11px;top:393.12px;width:76.64px;height:16.14px"><span>Detractor</span></div>
<div class="cell" style="left:638.75px;top:393.12px;width:76.64px;height:16.14px"><span>Needs improvement.</span></div>
<div class="cell" style="left:715.40px;top:393.12px;width:76.64px;height:16.14px"><span>32.9</span></div>
<div class="cell" style="left:792.04px;top:393.12px;width:76.64px;height:16.14px"><span>Yes</span></div>
<div class="cell" style="left:868.68px;top:393.12px;width:76.64px;height:16.14px"><span>Agent F</span></div>
<div class="cell" style="left:945.33px;top:393.12px;width:76.64px;height:16.14px"><span>No</span></div>
<div class="cell" style="left:1021.97px;top:393.12px;width:76.64px;height:16.14px"><span>1</span></div>
<div class="cell" style="left:1098.61px;top:393.12px;width:76.64px;height:16.14px"><span>0</span></div>
<div class="cell" style="left:1175.26px;top:393.12px;width:76.64px;height:16.14px"><span>1</span></div>
<div class="cell" style="left:25.61px;top:409.26px;width:76.64px;height:16.14px"><span>42</span></div>
<div class="cell" style="left:102.25px;top:409.26px;width:76.64px;height:16.14px"><span>24-Apr-24</span></div>
<div class="cell" style="left:178.90px;top:409.26px;width:76.64px;height:16.14px"><span>CUST1042</span></div>
<div class="cell" style="left:255.54px;top:409.26px;width:76.64px;height:16.14px"><span>North</span></div>
<div class="cell" style="left:332.18px;top:409.26px;width:76.64px;height:16.14px"><span>Product C</span></div>
<div class="cell" style="left:408.82px;top:409.26px;width:76.64px;height:16.14px"><span>SMS</span></div>
<div class="cell" style="left:485.47px;top:409.26px;width:76.64px;height:16.14px"><span>2</span></div>
<div class="cell" style="left:562.11px;top:409.26px;width:76.64px;height:16.14px"><span>Detractor</span></div>
<div class="cell" style="left:638.75px;top:409.26px;width:76.64px;height:16.14px"><span>Unresolved concern.</span></div>
<div class="cell" style="left:715.40px;top:409.26px;width:76.64px;height:16.14px"><span>31</span></div>
<div class="cell" style="left:792.04px;top:409.26px;width:76.64px;height:16.14px"><span>Yes</span></div>
<div class="cell" style="left:868.68px;top:409.26px;width:76.64px;height:16.14px"><span>Agent D</span></div>
<div class="cell" style="left:945.33px;top:409.26px;width:76.64px;height:16.14px"><span>Yes</span></div>
<div class="cell" style="left:1021.97px;top:409.26px;width:76.64px;height:16.14px"><span>1</span></div>
<div class="cell" style="left:1098.61px;top:409.26px;width:76.64px;height:16.14px"><span>1</span></div>
<div class="cell" style="left:1175.26px;top:409.26px;width:76.64px;height:16.14px"><span>1</span></div>
<div class="cell" style="left:25.61px;top:425.40px;width:76.64px;height:16.14px"><span>45</span></div>
<div class="cell" style="left:102.25px;top:425.40px;width:76.64px;height:16.14px"><span>16-Jul-24</span></div>
<div class="cell" style="left:178.90px;top:425.40px;width:76.64px;height:16.14px"><span>CUST1045</span></div>
<div class="cell" style="left:255.54px;top:425.40px;width:76.64px;height:16.14px"><span>North</span></div>
<div class="cell" style="left:332.18px;top:425.40px;width:76.64px;height:16.14px"><span>Product B</span></div>
<div class="cell" style="left:408.82px;top:425.40px;width:76.64px;height:16.14px"><span>SMS</span></div>
<div class="cell" style="left:485.47px;top:425.40px;width:76.64px;height:16.14px"><span>9</span></div>
<div class="cell" style="left:562.11px;top:425.40px;width:76.64px;height:16.14px"><span>Promoter</span></div>
<div class="cell" style="left:638.75px;top:425.40px;width:76.64px;height:16.14px"><span>Very satisfied.</span></div>
<div class="cell" style="left:715.40px;top:425.40px;width:76.64px;height:16.14px"><span>21</span></div>
<div class="cell" style="left:792.04px;top:425.40px;width:76.64px;height:16.14px"><span>Yes</span></div>
<div class="cell" style="left:868.68px;top:425.40px;width:76.64px;height:16.14px"><span>Agent F</span></div>
<div class="cell" style="left:945.33px;top:425.40px;width:76.64px;height:16.14px"><span>No</span></div>
<div class="cell" style="left:1021.97px;top:425.40px;width:76.64px;height:16.14px"><span>1</span></div>
<div class="cell" style="left:1098.61px;top:425.40px;width:76.64px;height:16.14px"><span>0</span></div>
<div class="cell" style="left:1175.26px;top:425.40px;width:76.64px;height:16.14px"><span>1</span></div>
<div class="cell" style="left:25.61px;top:441.54px;width:76.64px;height:16.14px"><span>52</span></div>
<div class="cell" style="left:102.25px;top:441.54px;width:76.64px;height:16.14px"><span>23-Jul-24</span></div>
<div class="cell" style="left:178.90px;top:441.54px;width:76.64px;height:16.14px"><span>CUST1052</span></div>
<div class="cell" style="left:255.54px;top:441.54px;width:76.64px;height:16.14px"><span>North</span></div>
<div class="cell" style="left:332.18px;top:441.54px;width:76.64px;height:16.14px"><span>Product D</span></div>
<div class="cell" style="left:408.82px;top:441.54px;width:76.64px;height:16.14px"><span>In-App</span></div>
<div class="cell" style="left:485.47px;top:441.54px;width:76.64px;height:16.14px"><span>3</span></div>
<div class="cell" style="left:562.11px;top:441.54px;width:76.64px;height:16.14px"><span>Detractor</span></div>
<div class="cell" style="left:638.75px;top:441.54px;width:76.64px;height:16.14px"><span>Not happy with support.</span></div>
<div class="cell" style="left:715.40px;top:441.54px;width:76.64px;height:16.14px"><span>8.9</span></div>
<div class="cell" style="left:792.04px;top:441.54px;width:76.64px;height:16.14px"><span>Yes</span></div>
<div class="cell" style="left:868.68px;top:441.54px;width:76.64px;height:16.14px"><span>Agent F</span></div>
<div class="cell" style="left:945.33px;top:441.54px;width:76.64px;height:16.14px"><span>Yes</span></div>
<div class="cell" style="left:1021.97px;top:441.54px;width:76.64px;height:16.14px"><span>1</span></div>
<div class="cell" style="left:1098.61px;top:441.54px;width:76.64px;height:16.14px"><span>1</span></div>
<div class="cell" style="left:1175.26px;top:441.54px;width:76.64px;height:16.14px"><span>1</span></div>
<div class="cell" style="left:25.61px;top:457.68px;width:76.64px;height:16.14px"><span>53</span></div>
<div class="cell" style="left:102.25px;top:457.68px;width:76.64px;height:16.14px"><span>22-Sep-24</span></div>
<div class="cell" style="left:178.90px;top:457.68px;width:76.64px;height:16.14px"><span>CUST1053</span></div>
<div class="cell" style="left:255.54px;top:457.68px;width:76.64px;height:16.14px"><span>North</span></div>
<div class="cell" style="left:332.18px;top:457.68px;width:76.64px;height:16.14px"><span>Product D</span></div>
<div class="cell" style="left:408.82px;top:457.68px;width:76.64px;height:16.14px"><span>In-App</span></div>
<div class="cell" style="left:485.47px;top:457.68px;width:76.64px;height:16.14px"><span>7</span></div>
<div class="cell" style="left:562.11px;top:457.68px;width:76.64px;height:16.14px"><span>Passive</span></div>
<div class="cell" style="left:638.75px;top:457.68px;width:76.64px;height:16.14px"><span>Average experience.</span></div>
<div class="cell" style="left:715.40px;top:457.68px;width:76.64px;height:16.14px"><span>38.6</span></div>
<div class="cell" style="left:792.04px;top:457.68px;width:76.64px;height:16.14px"><span>Yes</span></div>
<div class="cell" style="left:868.68px;top:457.68px;width:76.64px;height:16.14px"><span>Agent F</span></div>
<div class="cell" style="left:945.33px;top:457.68px;width:76.64px;height:16.14px"><span>No</span></div>
<div class="cell" style="left:1021.97px;top:457.68px;width:76.64px;height:16.14px"><span>1</span></div>
<div class="cell" style="left:1098.61px;top:457.68px;width:76.64px;height:16.14px"><span>0</span></div>
<div class="cell" style="left:1175.26px;top:457.68px;width:76.64px;height:16.14px"><span>1</span></div>
<div class="cell" style="left:25.61px;top:473.82px;width:76.64px;height:16.14px"><span>56</span></div>
<div class="cell" style="left:102.25px;top:473.82px;width:76.64px;height:16.14px"><span>9-February-24</span></div>
<div class="cell" style="left:178.90px;top:473.82px;width:76.64px;height:16.14px"><span>CUST1056</span></div>
<div class="cell" style="left:255.54px;top:473.82px;width:76.64px;height:16.14px"><span>North</span></div>
<div class="cell" style="left:332.18px;top:473.82px;width:76.64px;height:16.14px"><span>Product B</span></div>
<div class="cell" style="left:408.82px;top:473.82px;width:76.64px;height:16.14px"><span>In-App</span></div>
<div class="cell" style="left:485.47px;top:473.82px;width:76.64px;height:16.14px"><span>4</span></div>
<div class="cell" style="left:562.11px;top:473.82px;width:76.64px;height:16.14px"><span>Detractor</span></div>
<div class="cell" style="left:638.75px;top:473.82px;width:76.64px;height:16.14px"><span>Not happy with support.</span></div>
<div class="cell" style="left:715.40px;top:473.82px;width:76.64px;height:16.14px"><span>11.5</span></div>
<div class="cell" style="left:792.04px;top:473.82px;width:76.64px;height:16.14px"><span>Yes</span></div>
<div class="cell" style="left:868.68px;top:473.82px;width:76.64px;height:16.14px"><span>Agent F</span></div>
<div class="cell" style="left:945.33px;top:473.82px;width:76.64px;height:16.14px"><span>Yes</span></div>
<div class="cell" style="left:1021.97px;top:473.82px;width:76.64px;height:16.14px"><span>1</span></div>
<div class="cell" style="left:1098.61px;top:473.82px;width:76.64px;height:16.14px"><span>1</span></div>
<div class="cell" style="left:1175.26px;top:473.82px;width:76.64px;height:16.14px"><span>1</span></div>
<div class="cell" style="left:25.61px;top:489.96px;width:76.64px;height:16.14px"><span>67</span></div>
<div class="cell" style="left:102.25px;top:489.96px;width:76.64px;height:16.14px"><span>19-Dec-24</span></div>
<div class="cell" style="left:178.90px;top:489.96px;width:76.64px;height:16.14px"><span>CUST1067</span></div>
<div class="cell" style="left:255.54px;top:489.96px;width:76.64px;height:16.14px"><span>North</span></div>
<div class="cell" style="left:332.18px;top:489.96px;width:76.64px;height:16.14px"><span>Product A</span></div>
<div class="cell" style="left:408.82px;top:489.96px;width:76.64px;height:16.14px"><span>SMS</span></div>
<div class="cell" style="left:485.47px;top:489.96px;width:76.64px;height:16.14px"><span>10</span></div>
<div class="cell" style="left:562.11px;top:489.96px;width:76.64px;height:16.14px"><span>Promoter</span></div>
<div class="cell" style="left:638.75px;top:489.96px;width:76.64px;height:16.14px"><span>Very satisfied.</span></div>
<div class="cell" style="left:715.40px;top:489.96px;width:76.64px;height:16.14px"><span>25.8</span></div>
<div class="cell" style="left:792.04px;top:489.96px;width:76.64px;height:16.14px"><span>Yes</span></div>
<div class="cell" style="left:868.68px;top:489.96px;width:76.64px;height:16.14px"><span>Agent F</span></div>
<div class="cell" style="left:945.33px;top:489.96px;width:76.64px;height:16.14px"><span>No</span></div>
<div class="cell" style="left:1021.97px;top:489.96px;width:76.64px;height:16.14px"><span>1</span></div>
<div class="cell" style="left:1098.61px;top:489.96px;width:76.64px;height:16.14px"><span>0</span></div>
<div class="cell" style="left:1175.26px;top:489.96px;width:76.64px;height:16.14px"><span>1</span></div>
<div class="cell" style="left:25.61px;top:506.10px;width:76.64px;height:16.14px"><span>70</span></div>
<div class="cell" style="left:102.25px;top:506.10px;width:76.64px;height:16.14px"><span>30-Oct-24</span></div>
<div class="cell" style="left:178.90px;top:506.10px;width:76.64px;height:16.14px"><span>CUST1070</span></div>
<div class="cell" style="left:255.54px;top:506.10px;width:76.64px;height:16.14px"><span>North</span></div>
<div class="cell" style="left:332.18px;top:506.10px;width:76.64px;height:16.14px"><span>Product C</span></div>
<div class="cell" style="left:408.82px;top:506.10px;width:76.64px;height:16.14px"><span>Email</span></div>
<div class="cell" style="left:485.47px;top:506.10px;width:76.64px;height:16.14px"><span>4</span></div>
<div class="cell" style="left:562.11px;top:506.10px;width:76.64px;height:16.14px"><span>Detractor</span></div>
<div class="cell" style="left:638.75px;top:506.10px;width:76.64px;height:16.14px"><span>Issue took too long.</span></div>
<div class="cell" style="left:715.40px;top:506.10px;width:76.64px;height:16.14px"><span>12.1</span></div>
<div class="cell" style="left:792.04px;top:506.10px;width:76.64px;height:16.14px"><span>No</span></div>
<div class="cell" style="left:868.68px;top:506.10px;width:76.64px;height:16.14px"><span>Agent D</span></div>
<div class="cell" style="left:945.33px;top:506.10px;width:76.64px;height:16.14px"><span>No</span></div>
<div class="cell" style="left:1021.97px;top:506.10px;width:76.64px;height:16.14px"><span>0</span></div>
<div class="cell" style="left:1098.61px;top:506.10px;width:76.64px;height:16.14px"><span>0</span></div>
<div class="cell" style="left:1175.26px;top:506.10px;width:76.64px;height:16.14px"><span>1</span></div>
<div class="cell" style="left:25.61px;top:522.24px;width:76.64px;height:16.14px"><span>72</span></div>
<div class="cell" style="left:102.25px;top:522.24px;width:76.64px;height:16.14px"><span>23-June-24</span></div>
<div class="cell" style="left:178.90px;top:522.24px;width:76.64px;height:16.14px"><span>CUST1072</span></div>
<div class="cell" style="left:255.54px;top:522.24px;width:76.64px;height:16.14px"><span>North</span></div>
<div class="cell" style="left:332.18px;top:522.24px;width:76.64px;height:16.14px"><span>Product B</span></div>
<div class="cell" style="left:408.82px;top:522.24px;width:76.64px;height:16.14px"><span>Phone</span></div>
<div class="cell" style="left:485.47px;top:522.24px;width:76.64px;height:16.14px"><span>4</span></div>
<div class="cell" style="left:562.11px;top:522.24px;width:76.64px;height:16.14px"><span>Detractor</span></div>
<div class="cell" style="left:638.75px;top:522.24px;width:76.64px;height:16.14px"><span>Difficult to use.</span></div>
<div class="cell" style="left:715.40px;top:522.24px;width:76.64px;height:16.14px"><span>12</span></div>
<div class="cell" style="left:792.04px;top:522.24px;width:76.64px;height:16.14px"><span>Yes</span></div>
<div class="cell" style="left:868.68px;top:522.24px;width:76.64px;height:16.14px"><span>Agent D</span></div>
<div class="cell" style="left:945.33px;top:522.24px;width:76.64px;height:16.14px"><span>Yes</span></div>
<div class="cell" style="left:1021.97px;top:522.24px;width:76.64px;height:16.14px"><span>1</span></div>
<div class="cell" style="left:1098.61px;top:522.24px;width:76.64px;height:16.14px"><span>1</span></div>
<div class="cell" style="left:1175.26px;top:522.24px;width:76.64px;height:16.14px"><span>1</span></div>
<div class="abs" style="left:0;top:537.68px;width:1273px;height:11.72px;overflow:hidden">
<div class="cell" style="left:25.61px;top:0.7px;width:76.64px;height:16.14px"><span>77</span></div>
<div class="cell" style="left:102.25px;top:0.7px;width:76.64px;height:16.14px"><span>1-Apr-24</span></div>
<div class="cell" style="left:178.90px;top:0.7px;width:76.64px;height:16.14px"><span>CUST1077</span></div>
<div class="cell" style="left:255.54px;top:0.7px;width:76.64px;height:16.14px"><span>North</span></div>
<div class="cell" style="left:332.18px;top:0.7px;width:76.64px;height:16.14px"><span>Product A</span></div>
<div class="cell" style="left:408.82px;top:0.7px;width:76.64px;height:16.14px"><span>Chat</span></div>
<div class="cell" style="left:485.47px;top:0.7px;width:76.64px;height:16.14px"><span>4</span></div>
<div class="cell" style="left:562.11px;top:0.7px;width:76.64px;height:16.14px"><span>Detractor</span></div>
<div class="cell" style="left:638.75px;top:0.7px;width:76.64px;height:16.14px"><span>Needs improvement.</span></div>
<div class="cell" style="left:715.40px;top:0.7px;width:76.64px;height:16.14px"><span>14.4</span></div>
<div class="cell" style="left:792.04px;top:0.7px;width:76.64px;height:16.14px"><span>Yes</span></div>
<div class="cell" style="left:868.68px;top:0.7px;width:76.64px;height:16.14px"><span>Agent B</span></div>
<div class="cell" style="left:945.33px;top:0.7px;width:76.64px;height:16.14px"><span>Yes</span></div>
<div class="cell" style="left:1021.97px;top:0.7px;width:76.64px;height:16.14px"><span>1</span></div>
<div class="cell" style="left:1098.61px;top:0.7px;width:76.64px;height:16.14px"><span>1</span></div>
<div class="cell" style="left:1175.26px;top:0.7px;width:76.64px;height:16.14px"><span>1</span></div>
</div>
<div class="abs" style="left:1272.4px;top:65.2px;width:7.6px;height:483.5px;background:#fff;border-left:1px solid #e0e0e0"></div>
<div class="abs" style="left:1274.6px;top:85.0px;width:5.4px;height:18px;border-radius:2.7px;background:#d9dbde"></div>
<div class="abs" style="left:1272.4px;top:525.3px;width:7.6px;height:1px;background:#e0e0e0"></div>
<div class="abs" style="left:1272.4px;top:537.0px;width:7.6px;height:1px;background:#e0e0e0"></div>
<div class="abs" style="left:0;top:549.4px;width:1280px;height:9.5px;background:#fff;border-bottom:1px solid #e0e0e0"></div>
<div class="abs" style="left:1273px;top:548.3px;width:7px;height:1.1px;background:#e0e0e0"></div>
<div class="abs" style="left:24.6px;top:548.3px;width:1px;height:10.6px;background:#d0d0d0"></div>
<div class="abs" style="left:27.3px;top:550.0px;width:763px;height:6.8px;border-radius:3.4px;background:#d9dbde"></div>
<div class="abs" style="left:1249.7px;top:548.3px;width:1px;height:10.6px;background:#e0e0e0"></div>
<div class="abs" style="left:1262.0px;top:548.3px;width:1px;height:10.6px;background:#e0e0e0"></div>
<div class="abs" style="left:1272.4px;top:548.3px;width:1px;height:10.6px;background:#e0e0e0"></div>
<svg width="1280" height="564"><path d="M1275.5 533 l2.5 -2.6 l2.5 2.6 z M1275.5 541.5 l2.5 2.6 l2.5 -2.6 z" fill="#9aa0a6"/><path d="M1257.5 551.2 l-2.6 2.5 l2.6 2.5 z M1266.8 551.2 l2.6 2.5 l-2.6 2.5 z" fill="#9aa0a6"/></svg>
<div class="abs" style="left:0;top:558.9px;width:1280px;height:6px;background:#f1f4f9"></div>
<div class="abs" style="left:673px;top:559.5px;width:70px;height:5px;background:#dfe6f1"></div>
</body></html>
